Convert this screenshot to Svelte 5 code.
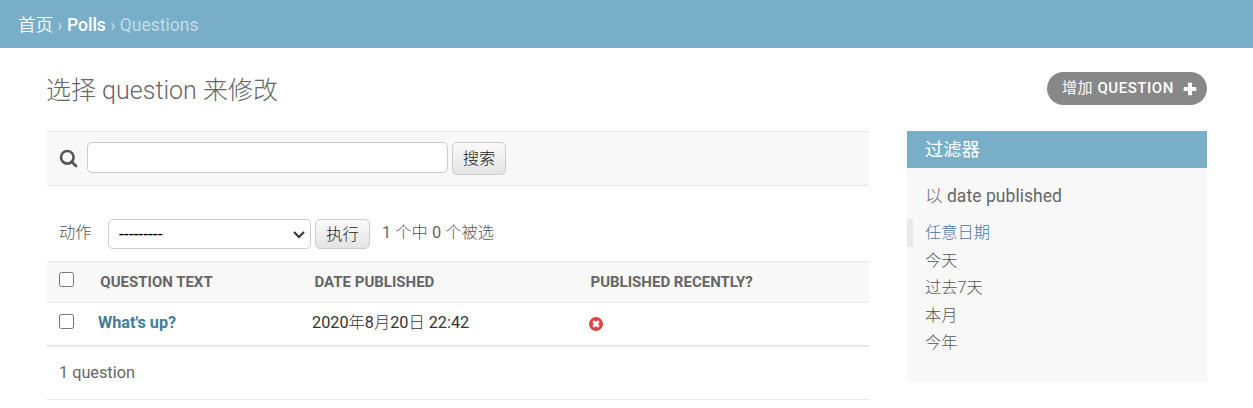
<script>
  const filters = ['任意日期', '今天', '过去7天', '本月', '今年'];
</script>

<nav class="crumbs">
  <a class="link" href="#home">首页</a> › <a class="link strong" href="#polls">Polls</a> › <span>Questions</span>
</nav>

<main>
  <div class="title">
    <h1>选择 question 来修改</h1>
    <a class="add" href="#add">
      <span><span class="thin">增加</span> QUESTION</span>
      <svg width="14" height="14" viewBox="0 0 14 14"><path d="M5 .7h4v4.300h4.300v4H9v4.300H5V9H.700V5H5z" fill="#fff" /></svg>
    </a>
  </div>

  <div class="columns">
    <section class="list">
      <form class="search">
        <svg width="20" height="20" viewBox="0 0 20 20" fill="none" stroke="#555">
          <circle cx="8.300" cy="8.300" r="6.300" stroke-width="2.600" />
          <path d="M12.700 12.700l4.300 4.300" stroke-width="2.800" stroke-linecap="round" />
        </svg>
        <input type="text" />
        <button type="button">搜索</button>
      </form>

      <div class="actions">
        <span class="label">动作</span>
        <div class="picker">
          <select><option>---------</option></select>
          <svg width="12" height="8" viewBox="0 0 12 8"><path d="M1 1l5 5 5-5" fill="none" stroke="#333" stroke-width="2" /></svg>
        </div>
        <button type="button">执行</button>
        <span class="count">1 <span class="thin">个中</span> 0 <span class="thin">个被选</span></span>
      </div>

      <div class="row head">
        <div><input type="checkbox" /></div>
        <div>QUESTION TEXT</div>
        <div>DATE PUBLISHED</div>
        <div>PUBLISHED RECENTLY?</div>
      </div>
      <div class="row body">
        <div><input type="checkbox" /></div>
        <div><a href="#question">What's up?</a></div>
        <div>2020<span class="thin">年</span>8<span class="thin">月</span>20<span class="thin">日</span> 22:42</div>
        <div class="status">
          <svg width="14" height="14" viewBox="0 0 14 14">
            <circle cx="7" cy="7" r="7" fill="#dd4646" />
            <path d="M4.300 4.300l5.400 5.400M9.700 4.300l-5.400 5.400" stroke="#fff" stroke-width="2.700" />
          </svg>
        </div>
      </div>
      <p class="pages">1 question</p>
    </section>

    <aside>
      <h2>过滤器</h2>
      <h3><span class="thin">以</span> date published</h3>
      <ul>
        {#each filters as filter, i}
          <li class:selected={i === 0}><a href="#filter">{filter}</a></li>
        {/each}
      </ul>
    </aside>
  </div>
</main>

<style>
  :global(body) {
    background: #fff;
    color: #333;
    font-family: Roboto, "Noto Sans CJK SC", sans-serif;
    font-size: 16.25px;
  }
  a { text-decoration: none; color: inherit; }
  h1, h2, h3, ul, p { margin: 0; padding: 0; }
  .thin { font-weight: 300; }
  .crumbs {
    height: 48px;
    box-sizing: border-box;
    padding: 0 18px;
    line-height: 50px;
    font-size: 17.5px;
    background: #79aec8;
    color: #c4dce8;
    white-space: pre-wrap;
    overflow: hidden;
  }
  .link { color: #fff; font-weight: 350; }
  .strong { font-weight: 500; }
  main { padding: 0 46px 0 47px; }
  .title {
    height: 83px;
    display: flex;
    justify-content: space-between;
    align-items: flex-start;
  }
  h1 {
    margin: 24px 0 0 -1px;
    font-size: 25px;
    line-height: 37px;
    font-weight: 300;
    color: #666;
  }
  .add {
    margin-top: 24px;
    width: 160px;
    height: 33px;
    box-sizing: border-box;
    padding: 0 10px 0 15px;
    display: flex;
    align-items: center;
    justify-content: space-between;
    border-radius: 17px;
    background: #888;
    color: #fff;
    font-size: 15px;
    line-height: 32px;
    font-weight: 500;
    letter-spacing: 0.55px;
  }
  .add > span { height: 33px; }
  .add .thin { font-weight: 400; }
  .columns {
    display: grid;
    grid-template-columns: 822px 300px;
    justify-content: space-between;
    align-items: start;
  }
  .search {
    height: 55px;
    box-sizing: border-box;
    padding: 10px 12px;
    display: flex;
    align-items: flex-start;
    border: solid #e8e8e8;
    border-width: 1px 0;
    background: #f8f8f8;
  }
  .search svg { margin: 7px 8px 0 0; }
  .search input {
    width: 361px;
    height: 31px;
    box-sizing: border-box;
    margin: 0 4px 0 0;
    border: 1px solid #ccc;
    border-radius: 5px;
    background: #fff;
  }
  button {
    box-sizing: border-box;
    width: 54px;
    height: 33px;
    padding: 0;
    border: 1px solid #ccc;
    border-radius: 5px;
    background: linear-gradient(#fafafa, #e4e4e4);
    color: #222;
    font: 300 16.25px/32px Roboto, "Noto Sans CJK SC", sans-serif;
  }
  .actions {
    height: 75px;
    box-sizing: border-box;
    padding: 33px 12px 0;
    display: flex;
    align-items: flex-start;
    color: #666;
    line-height: 28px;
  }
  .actions button { width: 55px; height: 30px; line-height: 27px; }
  .label { width: 49px; font-weight: 300; color: #555; }
  .picker {
    box-sizing: border-box;
    width: 203px;
    height: 30px;
    margin-right: 4px;
    padding-right: 5px;
    display: flex;
    align-items: center;
    border: 1px solid #ccc;
    border-radius: 5px;
    background: #fff;
  }
  .picker svg { margin-top: 2px; }
  select {
    appearance: none;
    flex: 1;
    height: 28px;
    padding: 0 0 0 10px;
    border: 0;
    background: none;
    color: #000;
    font: 17.5px Roboto, sans-serif;
  }
  .count { margin-left: 12px; letter-spacing: 0.05px; }
  .count .thin { color: #555; }
  .row {
    display: grid;
    grid-template-columns: 41.300px 214.200px 276px 1fr;
    padding-left: 12px;
  }
  .row input { width: 15px; height: 15px; margin: 11px 0 0; display: block; }
  .head {
    height: 40px;
    border: solid #e8e8e8;
    border-width: 1px 0;
    background: #f8f8f8;
    color: #666;
    font-size: 15px;
    line-height: 40px;
    font-weight: 700;
  }
  .head input { margin-top: 10px; }
  .body {
    grid-template-columns: 39px 214px 277px 1fr;
    height: 42px;
    border-bottom: 2px solid #e8e8e8;
    line-height: 39px;
  }
  .body a { color: #447e9b; font-weight: 700; }
  .status svg { display: block; margin-top: 14px; }
  .pages {
    height: 52px;
    padding-left: 12px;
    border-bottom: 1px solid #e8e8e8;
    line-height: 51px;
    color: #666;
  }
  aside {
    height: 251px;
    background: #f8f8f8;
    color: #666;
  }
  h2 {
    height: 37px;
    padding-left: 18px;
    background: #79aec8;
    color: #fff;
    font-size: 18.3px;
    line-height: 38px;
    font-weight: 400;
  }
  h3 {
    padding: 15px 18px 0;
    font-size: 17.5px;
    line-height: 27px;
    font-weight: 400;
    letter-spacing: 0.05px;
  }
  ul { list-style: none; padding-top: 9px; }
  li {
    height: 27.500px;
    padding-left: 18px;
    line-height: 27.500px;
    font-weight: 300;
    color: #555;
  }
  .selected {
    padding-left: 12px;
    border-left: 6px solid #e8e8e8;
    color: #4a74ad;
  }
</style>
